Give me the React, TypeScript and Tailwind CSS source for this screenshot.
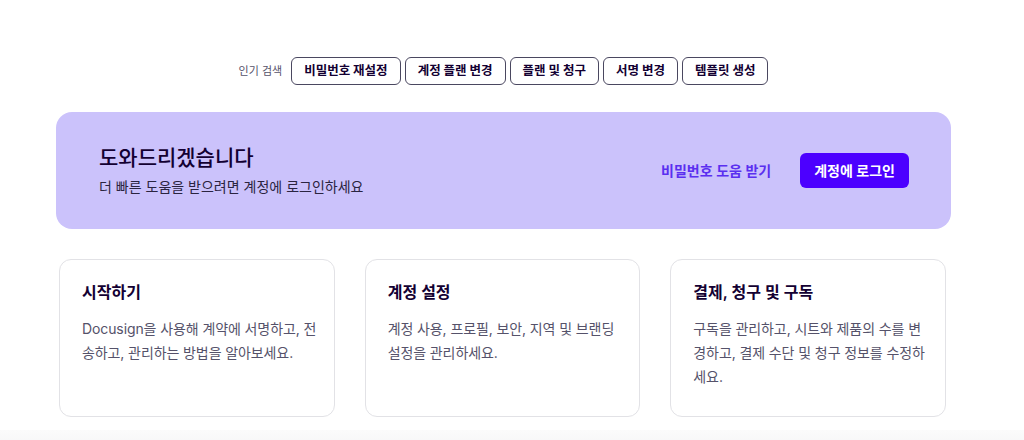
const chips = ["비밀번호 재설정", "계정 플랜 변경", "플랜 및 청구", "서명 변경", "템플릿 생성"];

const cards = [
  { title: "시작하기", body: "Docusign을 사용해 계약에 서명하고, 전송하고, 관리하는 방법을 알아보세요." },
  { title: "계정 설정", body: "계정 사용, 프로필, 보안, 지역 및 브랜딩 설정을 관리하세요." },
  { title: "결제, 청구 및 구독", body: "구독을 관리하고, 시트와 제품의 수를 변경하고, 결제 수단 및 청구 정보를 수정하세요." },
];

export default function App() {
  return (
    <main className="min-h-[440px] bg-white font-['Inter','Noto_Sans_CJK_KR',sans-serif] text-[#130032]">
      <div className="pr-[17px]">
        {/* popular searches */}
        <div className="flex items-center justify-center gap-1 pt-[57px]">
          <span className="mr-[5px] text-[11px] text-[#55526a]">인기 검색</span>
          {chips.map((c) => (
            <button
              key={c}
              className="h-7 rounded-md border border-[#4a4760] px-3 text-[12.5px] font-bold text-[#130032]"
            >
              {c}
            </button>
          ))}
        </div>

        {/* help banner */}
        <section className="mx-[56px] mt-[27px] flex h-[117px] items-center justify-between rounded-2xl bg-[#cbc2fb] pl-[43px] pr-[42px]">
          <div>
            <h2 className="text-[21px] font-medium leading-7">도와드리겠습니다</h2>
            <p className="mt-[4px] text-[14px] text-[#2a2440]">더 빠른 도움을 받으려면 계정에 로그인하세요</p>
          </div>
          <div className="flex items-center gap-[29px]">
            <a className="text-[14px] font-semibold text-[#5a2ff0]">비밀번호 도움 받기</a>
            <button className="h-[35px] rounded-md bg-[#4c00ff] px-[14px] text-[14px] font-semibold text-white">
              계정에 로그인
            </button>
          </div>
        </section>

        {/* topic cards */}
        <section className="ml-[59px] mr-[61px] mt-[30px] grid grid-cols-3 gap-[30px]">
          {cards.map((card) => (
            <div key={card.title} className="h-[158px] rounded-xl border border-[#e2e2e6] pl-[22px] pr-[12px] pt-[20px]">
              <h3 className="text-[16px] font-semibold leading-6">{card.title}</h3>
              <p className="mt-[13px] break-all text-[14px] leading-6 tracking-[-0.1px] text-[#55526a]">{card.body}</p>
            </div>
          ))}
        </section>
      </div>
      <div className="mt-[13px] h-[20px] bg-gradient-to-b from-[#fbfbfb] to-[#f5f5f6]" />
    </main>
  );
}
